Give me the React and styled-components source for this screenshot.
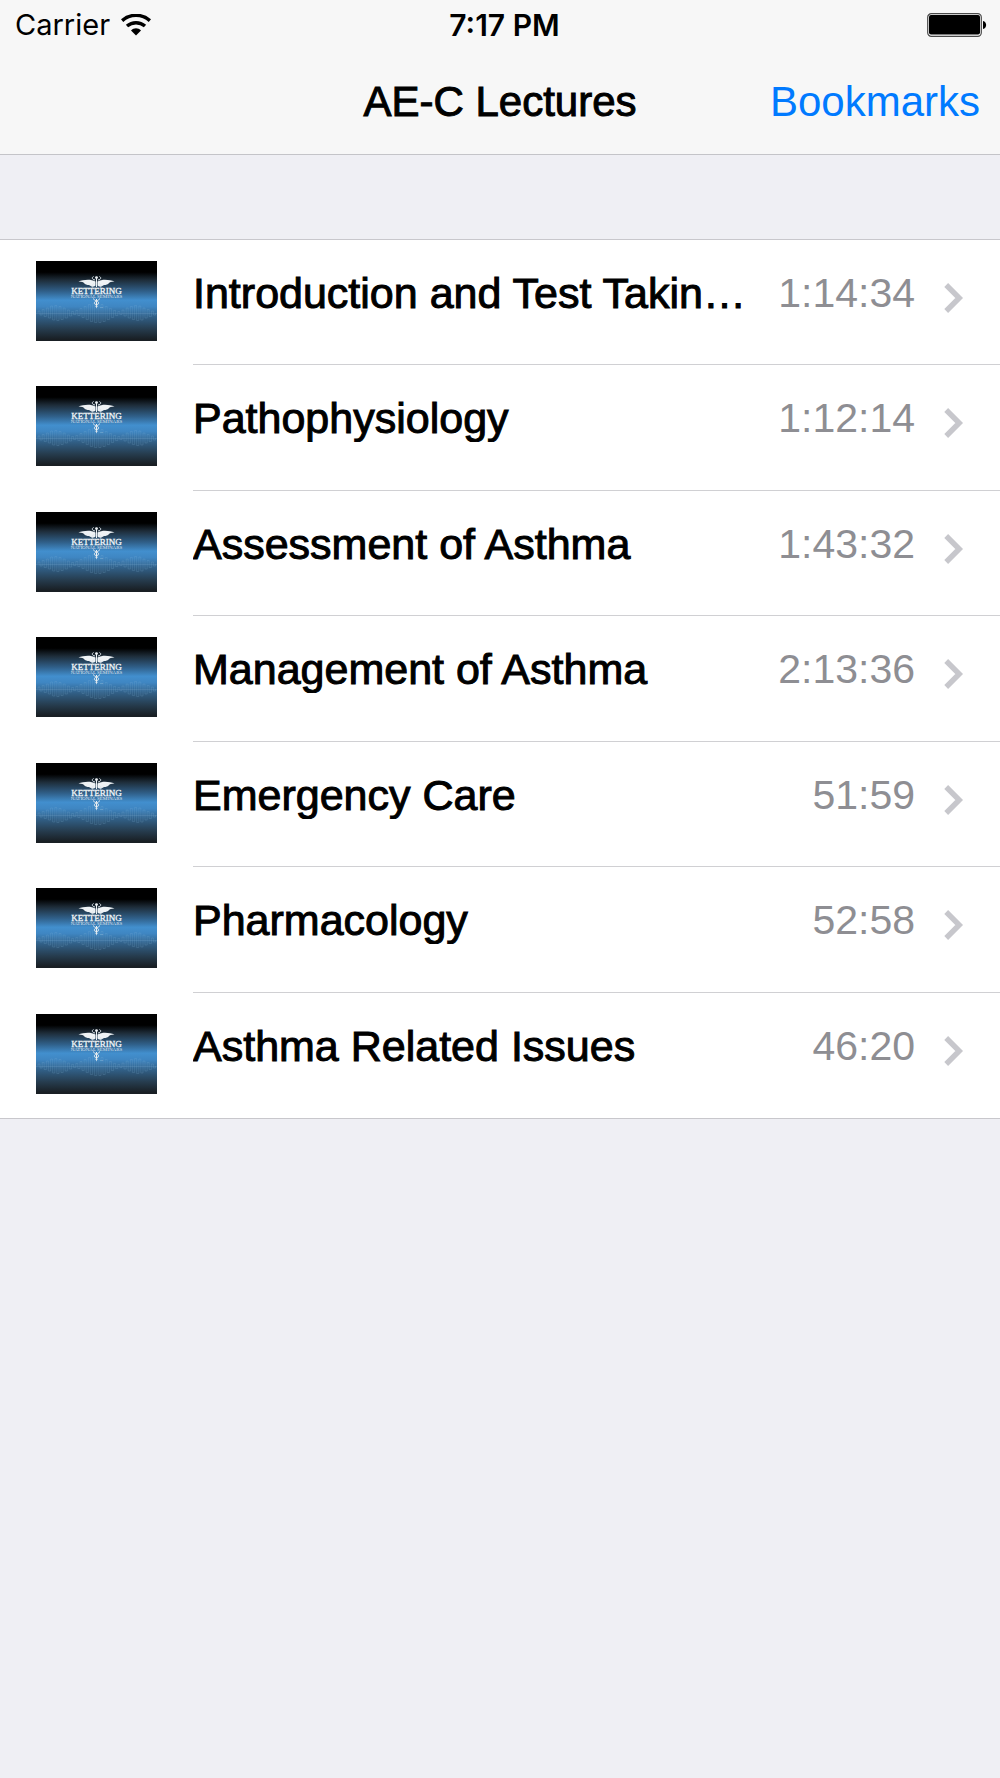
import React from 'react';
import styled, { createGlobalStyle } from 'styled-components';

const GlobalStyle = createGlobalStyle`
  * {
    box-sizing: border-box;
  }

  body {
    margin: 0;
    background: #efeff4;
    color: #000;
    font-family: "Liberation Sans", Arial, sans-serif;
    font-size: 42px;
    line-height: 48px;
  }
`;

const LECTURES = [
    { title: 'Introduction and Test Takin…', duration: '1:14:34' },
    { title: 'Pathophysiology', duration: '1:12:14' },
    { title: 'Assessment of Asthma', duration: '1:43:32' },
    { title: 'Management of Asthma', duration: '2:13:36' },
    { title: 'Emergency Care', duration: '51:59' },
    { title: 'Pharmacology', duration: '52:58' },
    { title: 'Asthma Related Issues', duration: '46:20' }
];

const Header = styled.header`
  background: #f7f7f7;
  border-bottom: 1px solid #c4c4c8;
`;

const StatusBar = styled.div`
  display: grid;
  grid-template-columns: 1fr auto 1fr;
  align-items: center;
  height: 48px;
  padding: 2px 6px 0 15px;
  font-family: Inter, "Liberation Sans", sans-serif;
  font-size: 29px;
  line-height: 32px;
`;

const Carrier = styled.div`
  display: flex;
  align-items: center;
  gap: 11px;
`;

const Clock = styled.time`
  font-size: 30px;
  font-weight: 600;
`;

const BatteryIcon = styled.svg`
  justify-self: end;
  margin-right: 7px;
`;

const NavBar = styled.nav`
  display: grid;
  grid-template-columns: 1fr auto 1fr;
  align-items: center;
  height: 106px;
  padding: 2px 20px 0;
`;

// Medium weight: regular outlines thickened by a thin stroke.
const NavTitle = styled.h1`
  grid-column: 2;
  margin: 0;
  font-size: 42px;
  font-weight: 400;
  -webkit-text-stroke: 1px currentColor;
`;

const NavLink = styled.a`
  justify-self: end;
  color: #007aff;
  text-decoration: none;
`;

const LectureList = styled.ul`
  margin: 84px 0 0;
  padding: 0;
  list-style: none;
  background: #fff;
  border-top: 1px solid #c8c7cc;
  border-bottom: 1px solid #c8c7cc;
`;

const LectureItem = styled.li`
  height: 125px;

  &:nth-child(even) {
    height: 126px;
  }
`;

const LectureLink = styled.a`
  display: flex;
  height: 100%;
  padding-left: 36px;
  gap: 36px;
  color: inherit;
  text-decoration: none;
`;

const Thumbnail = styled.svg`
  flex: none;
  margin-top: 21px;
`;

const LectureBody = styled.div`
  flex: 1;
  min-width: 0;
  display: flex;
  align-items: flex-start;
  padding: 29px 36px 0 0;
  border-bottom: 1px solid #d0d0d3;

  ${LectureItem}:last-child & {
    border-bottom: 0;
  }
`;

const LectureTitle = styled.span`
  flex: 1;
  min-width: 0;
  overflow: hidden;
  white-space: nowrap;
  text-overflow: ellipsis;
  font-size: 43px;
  -webkit-text-stroke: 1px currentColor;
`;

const Duration = styled.span`
  margin-left: 20px;
  color: #8e8e93;
  font-size: 41px;
`;

const Chevron = styled.svg`
  flex: none;
  margin: 13px 0 0 28px;
`;

const WifiIcon = () => (
    <svg width="30" height="22" viewBox="0 0 30 22" aria-hidden="true">
        <path d="M1.1 6.6C9-.4 21-.4 28.9 6.6" fill="none" stroke="#000" strokeWidth="3.5" />
        <path d="M6 12c5.2-4.5 12.8-4.5 18 0" fill="none" stroke="#000" strokeWidth="3.5" />
        <path d="M10 16.5c2.9-2.9 7.1-2.9 10 0l-5 5z" />
    </svg>
);

const Battery = () => (
    <BatteryIcon width="60" height="24" viewBox="0 0 60 24" role="img" aria-label="Battery full">
        <rect x="0.7" y="0.7" width="53.6" height="22.6" rx="3.6" fill="#f7f7f7" stroke="#4a4a4a" strokeWidth="1.2" />
        <rect x="2" y="2" width="51" height="19.5" rx="2" />
        <path d="M56 8c4.2.6 4.2 7.4 0 8z" />
    </BatteryIcon>
);

const WAVE_HEIGHTS = [4, 7, 10, 14, 15, 13, 10, 6, 3, 5, 9, 13, 17, 19, 19, 17, 13, 9, 5, 3, 6, 10, 13, 15, 14, 10, 7, 4];

// Square pulses that swing around the baseline at y = 52.
const wavePath = WAVE_HEIGHTS.map((h, i) => {
    const x = 2 + i * 4.2;
    return `M${x} 52v${-h / 2}h2v${h}h2.2v${-h / 2}`;
}).join('');

const LectureThumbnail = () => (
    <Thumbnail width="121" height="80" viewBox="0 0 121 80" aria-hidden="true">
        <defs>
            <linearGradient id="thumb-sky" x1="0" y1="0" x2="0" y2="1">
                <stop offset="0" stopColor="#000" />
                <stop offset="0.14" stopColor="#000" />
                <stop offset="0.24" stopColor="#1e2d3a" />
                <stop offset="0.38" stopColor="#30608a" />
                <stop offset="0.49" stopColor="#428fce" />
                <stop offset="0.57" stopColor="#3f86c2" />
                <stop offset="0.7" stopColor="#315f86" />
                <stop offset="0.85" stopColor="#263c4e" />
                <stop offset="0.98" stopColor="#191f24" />
            </linearGradient>
        </defs>
        <rect width="121" height="80" fill="url(#thumb-sky)" />
        <path d="M0 52.5h121" stroke="#8db9dc" strokeWidth="0.7" opacity="0.25" />
        <path d={wavePath} fill="none" stroke="#8db9dc" strokeWidth="0.7" opacity="0.25" />
        <g fill="#eef2f5">
            <path d="M59.5 20.5C54 17.5 47 19 42.5 20.5c3.5.2 5 .8 5.5 1.5 1 1.4 3 2 5 2 1.5 1.3 3.5 1.5 5 1.5l1.5-1z" />
            <path d="M61.5 20.5C67 17.500 74 19 78.500 20.500c-3.500.2-5 .8-5.500 1.500-1 1.400-3 2-5 2-1.500 1.300-3.500 1.500-5 1.500l-1.500-1z" />
            <circle cx="60.5" cy="16.6" r="1.4" />
            <path d="M60 17h1v9h-1zM60 38h1v8l-.5 1.5-.5-1.5z" />
        </g>
        <g fill="none" stroke="#dfe7ed" strokeWidth="1">
            <path d="M59 19c-3-.5-3.5-2.5-1.5-3.5M62 19c3-.5 3.5-2.5 1.5-3.5" />
            <path d="M58 22.5c-2 1-3 2.5-1 4M63 22.5c2 1 3 2.5 1 4" />
            <path d="M57.5 37.5c0 2.5 5.5 2 5 4.5s-3 2-2.5 4M63.5 37.5c0 2.5-5.5 2-5 4.5s3 2 2.5 4" />
        </g>
        <g fill="#f2f5f7" textAnchor="middle">
            <text x="60.5" y="32.5" fontFamily="Liberation Serif, serif" fontSize="9" stroke="#f2f5f7" strokeWidth="0.3">KETTERING</text>
            <text x="60.5" y="37" fontFamily="Liberation Serif, serif" fontSize="5" fillOpacity="0.9">NATIONAL SEMINARS</text>
        </g>
        <text x="64" y="47" fill="#a9c8e0" fontFamily="Liberation Sans, sans-serif" fontSize="2">TM</text>
    </Thumbnail>
);

const Lecture = ({ title, duration }) => (
    <LectureItem>
        <LectureLink href="#">
            <LectureThumbnail />
            <LectureBody>
                <LectureTitle>{title}</LectureTitle>
                <Duration>{duration}</Duration>
                <Chevron width="21" height="32" viewBox="0 0 21 32" aria-hidden="true">
                    <path d="M3.2 3l13 13-13 13" fill="none" stroke="#c7c7cc" strokeWidth="5.4" />
                </Chevron>
            </LectureBody>
        </LectureLink>
    </LectureItem>
);

const App = () => (
    <>
        <GlobalStyle />
        <Header>
            <StatusBar>
                <Carrier>
                    Carrier
                    <WifiIcon />
                </Carrier>
                <Clock>7:17 PM</Clock>
                <Battery />
            </StatusBar>
            <NavBar>
                <NavTitle>AE-C Lectures</NavTitle>
                <NavLink href="#">Bookmarks</NavLink>
            </NavBar>
        </Header>
        <main>
            <LectureList>
                {LECTURES.map((lecture) => (
                    <Lecture key={lecture.title} {...lecture} />
                ))}
            </LectureList>
        </main>
    </>
);

export default App;
